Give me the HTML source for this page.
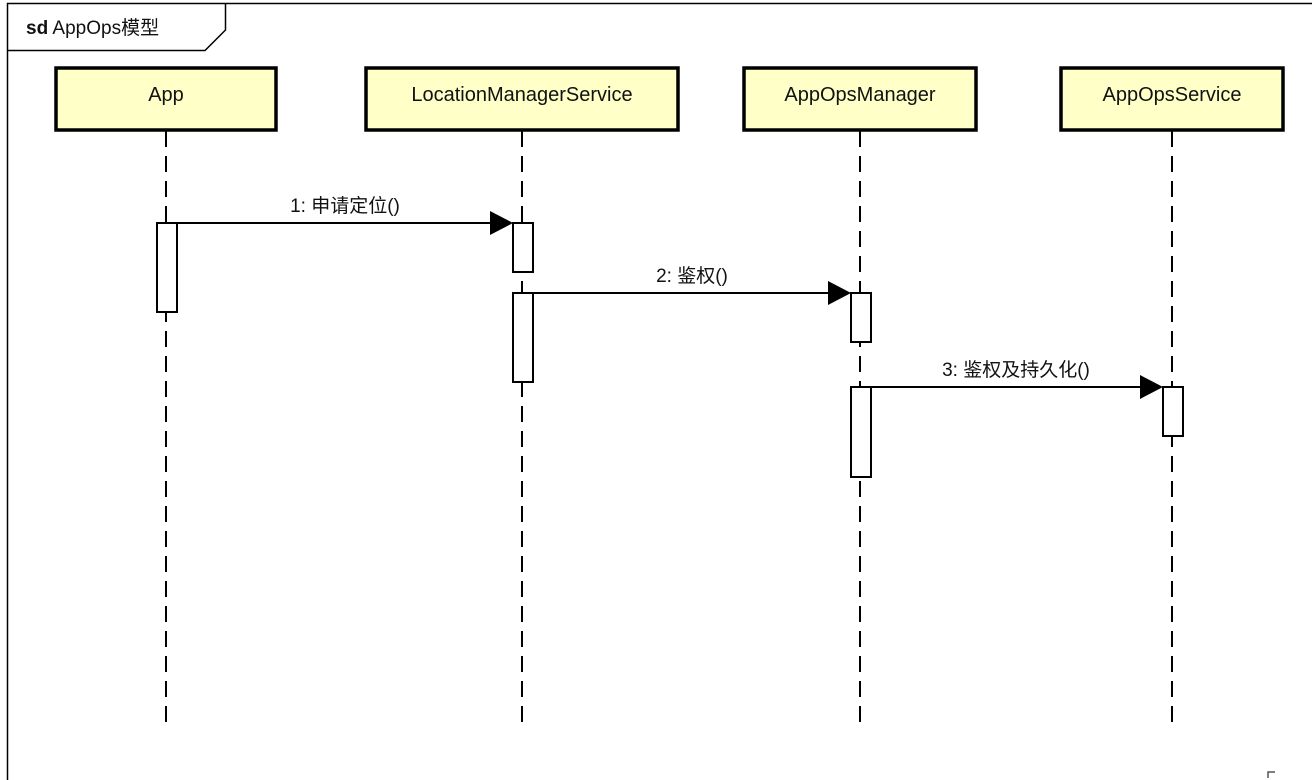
<!DOCTYPE html>
<html><head><meta charset="utf-8"><style>
html,body{margin:0;padding:0;background:#fff;width:1312px;height:780px;overflow:hidden}
text{font-family:"Liberation Sans","Noto Sans CJK SC",sans-serif;fill:#111}
</style></head><body>
<svg width="1312" height="780" xmlns="http://www.w3.org/2000/svg">
<rect x="0" y="0" width="1312" height="780" fill="#fff"/>
<path d="M7.5 800 V3.5 H1320" fill="none" stroke="#000" stroke-width="1.5"/>
<path d="M7.5 50.5 H205 L225.5 30 V3.5" fill="none" stroke="#000" stroke-width="1.5"/>
<text x="26" y="34" font-size="19"><tspan font-weight="bold">sd</tspan> AppOps模型</text>
<g stroke="#000" stroke-width="2" stroke-dasharray="16 9">
<line x1="166" y1="131" x2="166" y2="731"/>
<line x1="522" y1="131" x2="522" y2="731"/>
<line x1="860" y1="131" x2="860" y2="731"/>
<line x1="1172" y1="131" x2="1172" y2="731"/>
</g>
<g fill="#ffffc8" stroke="#000" stroke-width="3.5">
<rect x="56" y="68" width="220" height="62"/>
<rect x="366" y="68" width="312" height="62"/>
<rect x="744" y="68" width="232" height="62"/>
<rect x="1061" y="68" width="222" height="62"/>
</g>
<g font-size="20" text-anchor="middle">
<text x="166" y="101">App</text>
<text x="522" y="101">LocationManagerService</text>
<text x="860" y="101">AppOpsManager</text>
<text x="1172" y="101">AppOpsService</text>
</g>
<g fill="#fff" stroke="#000" stroke-width="2">
<rect x="157" y="223" width="20" height="89"/>
<rect x="513" y="223" width="20" height="49"/>
<rect x="513" y="293" width="20" height="89"/>
<rect x="851" y="293" width="20" height="49"/>
<rect x="851" y="387" width="20" height="90"/>
<rect x="1163" y="387" width="20" height="49"/>
</g>
<g stroke="#000" stroke-width="2">
<line x1="177" y1="223" x2="500" y2="223"/>
<line x1="533" y1="293" x2="838" y2="293"/>
<line x1="871" y1="387" x2="1150" y2="387"/>
</g>
<g fill="#000">
<path d="M490 211 L513 223 L490 235 Z"/>
<path d="M828 281 L851 293 L828 305 Z"/>
<path d="M1140 375 L1163 387 L1140 399 Z"/>
</g>
<g font-size="19" text-anchor="middle">
<text x="345" y="212">1: 申请定位()</text>
<text x="692" y="282">2: 鉴权()</text>
<text x="1016" y="376">3: 鉴权及持久化()</text>
</g>
<path d="M1275 772 H1268 V778" fill="none" stroke="#555" stroke-width="1.5"/>
</svg>
</body></html>
